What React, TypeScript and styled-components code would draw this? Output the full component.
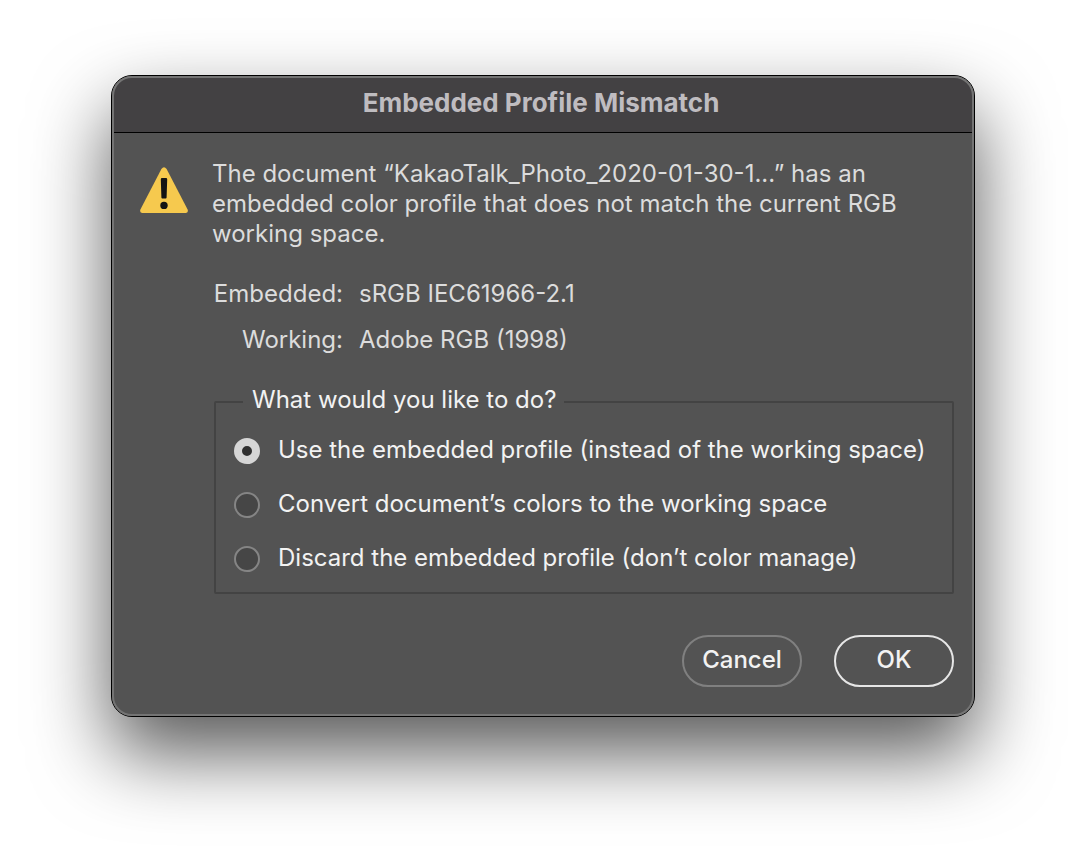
import React, { useState } from "react";
import styled, { createGlobalStyle } from "styled-components";

const GlobalStyle = createGlobalStyle`
  *, *::before, *::after { box-sizing: border-box; }
  body {
    margin: 0;
    background: #ffffff;
    font-family: Inter, "Liberation Sans", sans-serif;
    font-size: 24px;
    line-height: 30px;
    -webkit-font-smoothing: antialiased;
  }
`;

const Page = styled.main`
  min-height: 100vh;
  padding: 75px 111px 147px;
  display: flex;
  justify-content: center;
  align-items: flex-start;
`;

const Dialog = styled.section`
  width: 100%;
  max-width: 960px;
  position: relative;
  border: 1px solid #000000;
  border-radius: 21px;
  background: #535353;
  color: #dcdcdc;
  box-shadow: 0 36px 78px rgba(0, 0, 0, 0.66);

  &::after {
    content: "";
    position: absolute;
    inset: 0;
    border: 2px solid #747474;
    border-radius: 20px;
    pointer-events: none;
  }
`;

const TitleBar = styled.header`
  padding: 12px 28px 14px 24px;
  border-bottom: 1px solid #000000;
  border-radius: 20px 20px 0 0;
  background: #434143;
`;

const Title = styled.h1`
  margin: 0;
  font-size: 26px;
  line-height: 30px;
  font-weight: 700;
  text-align: center;
  color: #bfbcc0;
`;

const Content = styled.div`
  display: flex;
  align-items: flex-start;
  gap: 24px;
  padding: 26px 20px 29px 28px;
`;

const WarningIcon = styled.svg`
  flex: none;
  width: 48px;
  height: 46px;
  margin-top: 8px;
`;

const Main = styled.div`
  flex: 1;
  min-width: 0;
`;

const Message = styled.p`
  margin: 0 0 30px;
  max-width: 700px;
`;

const Profiles = styled.dl`
  display: grid;
  grid-template-columns: 131px 1fr;
  gap: 16px;
  margin: 0 0 30px;
`;

const ProfileName = styled.dt`
  text-align: right;
`;

const ProfileValue = styled.dd`
  margin: 0;
`;

const Choices = styled.fieldset`
  margin: 0 0 41px 2px;
  padding: 16px 18px 19px;
  border: 2px solid #434343;
  border-radius: 2px;
  color: #f2f2f2;
`;

const Legend = styled.legend`
  margin-left: 9px;
  padding: 0 8px 4px 9px;
`;

const ChoiceList = styled.div`
  display: flex;
  flex-direction: column;
  gap: 24px;
`;

const Choice = styled.label`
  display: flex;
  align-items: center;
  gap: 18px;
`;

const Radio = styled.input`
  appearance: none;
  flex: none;
  width: 26px;
  height: 26px;
  margin: 2px 0 0;
  border: 2px solid #858585;
  border-radius: 50%;
  background: #464646;

  &:checked {
    border: 8px solid #d6d6d6;
    background: #303030;
  }
`;

const Actions = styled.div`
  display: flex;
  justify-content: flex-end;
  gap: 32px;
`;

const ActionButton = styled.button<{ $primary?: boolean }>`
  width: 120px;
  height: 52px;
  padding: 0 0 2px;
  border: 2px solid ${(p) => (p.$primary ? "#e6e6e6" : "#808080")};
  border-radius: 26px;
  background: transparent;
  color: #f2f2f2;
  font: inherit;
  font-weight: 500;
`;

const options = [
  "Use the embedded profile (instead of the working space)",
  "Convert document’s colors to the working space",
  "Discard the embedded profile (don’t color manage)",
];

export default function App() {
  const [selected, setSelected] = useState(0);
  return (
    <>
      <GlobalStyle />
      <Page>
        <Dialog role="dialog" aria-labelledby="dialog-title">
          <TitleBar>
            <Title id="dialog-title">Embedded Profile Mismatch</Title>
          </TitleBar>
          <Content>
            <WarningIcon viewBox="0 0 48 46" role="img" aria-label="Warning">
              <path
                d="M21.4 1.9Q24-1.4 26.6 1.9L47.6 42.6Q48.6 45.6 46 46H2Q-.6 45.6.4 42.6Z"
                fill="#f6c94e"
              />
              <path
                d="M20.8 12.2Q20.8 11 22 11H26Q27.2 11 27.2 12.2L26.6 30.4Q26.6 31.4 25.6 31.4H22.4Q21.4 31.4 21.4 30.4Z"
                fill="#141414"
              />
              <circle cx="24" cy="38.4" r="3.7" fill="#141414" />
            </WarningIcon>
            <Main>
              <Message>
                The document “KakaoTalk_Photo_2020-01-30-1...” has an embedded
                color profile that does not match the current RGB working space.
              </Message>
              <Profiles>
                <ProfileName>Embedded:</ProfileName>
                <ProfileValue>sRGB IEC61966-2.1</ProfileValue>
                <ProfileName>Working:</ProfileName>
                <ProfileValue>Adobe RGB (1998)</ProfileValue>
              </Profiles>
              <Choices>
                <Legend>What would you like to do?</Legend>
                <ChoiceList>
                  {options.map((text, i) => (
                    <Choice key={text}>
                      <Radio
                        type="radio"
                        name="profile"
                        checked={selected === i}
                        onChange={() => setSelected(i)}
                      />
                      {text}
                    </Choice>
                  ))}
                </ChoiceList>
              </Choices>
              <Actions>
                <ActionButton type="button">Cancel</ActionButton>
                <ActionButton type="button" $primary>
                  OK
                </ActionButton>
              </Actions>
            </Main>
          </Content>
        </Dialog>
      </Page>
    </>
  );
}
